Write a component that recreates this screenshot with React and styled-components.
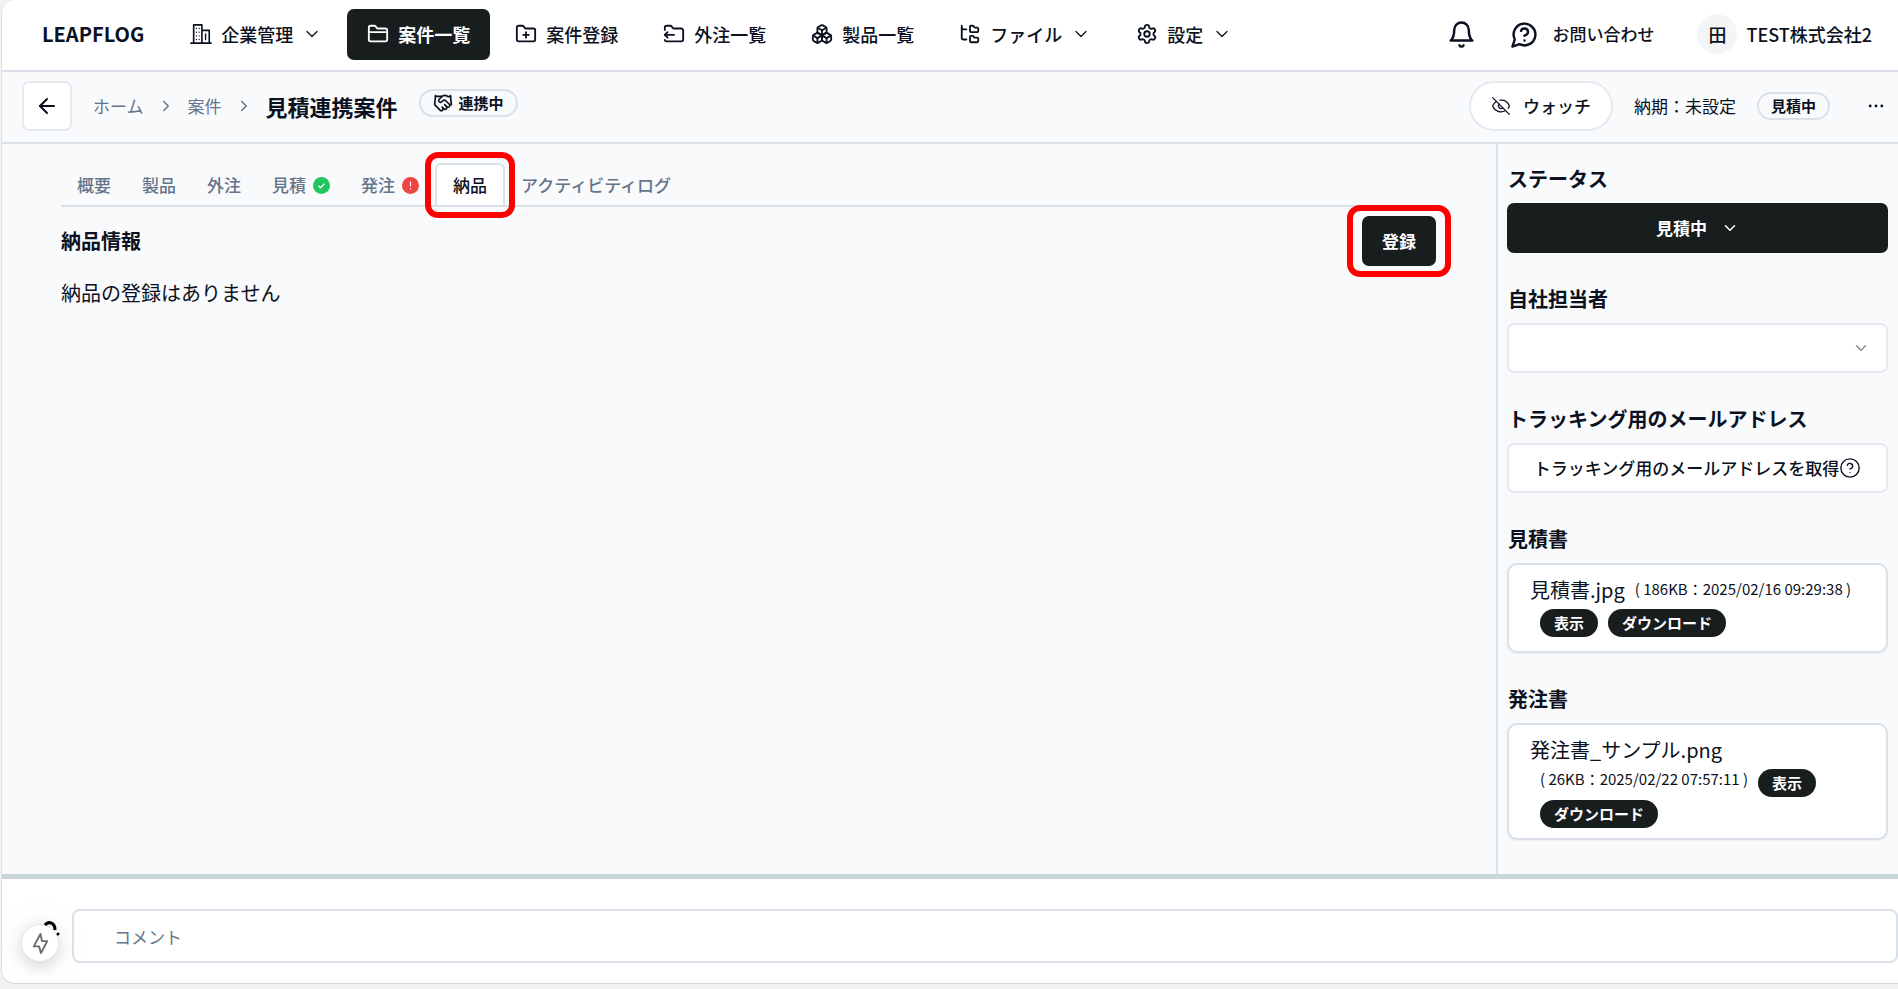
import React from "react";
import styled, { createGlobalStyle, css } from "styled-components";
import {
  ArrowLeft,
  Boxes,
  ChevronDown,
  ChevronRight,
  CircleHelp,
  Ellipsis,
  EyeOff,
  FolderClosed,
  FolderOutput,
  FolderPlus,
  FolderTree,
  Handshake,
  Settings
} from "lucide-react";

const colors = {
  ink: "#0b1120",
  dark: "#181d1e",
  muted: "#64748b",
  line: "#dae1e8",
  lineSoft: "#e5eaf1",
  surface: "#f9fafc",
  marker: "#ff0000"
};

const GlobalStyle = createGlobalStyle`
  *, *::before, *::after {
    box-sizing: border-box;
  }
  body {
    margin: 0;
    background: #f1f2f3;
    color: ${colors.ink};
    font-family: "Noto Sans CJK JP", "Noto Sans", sans-serif;
    font-size: 17px;
    line-height: 24px;
  }
  h1, h2, p, ol {
    margin: 0;
    padding: 0;
  }
  button, input, select {
    font: inherit;
    color: inherit;
  }
  button {
    cursor: pointer;
  }
  a {
    color: inherit;
    text-decoration: none;
  }
  svg {
    flex: none;
  }
`;

const row = css`
  display: flex;
  align-items: center;
`;

const Shell = styled.div`
  display: flex;
  flex-direction: column;
  min-height: calc(100vh - 5px);
  margin-left: 1px;
  overflow: hidden;
  border-left: 1px solid #e0e2e4;
  border-bottom: 1px solid #d4d6d8;
  border-radius: 14px 0 0 14px;
  background: #fff;
`;

const Header = styled.header`
  ${row}
  height: 72px;
  padding: 0 26px 2px 40px;
  border-bottom: 2px solid ${colors.line};
`;

const Logo = styled.a`
  margin-right: 26px;
  font-size: 20px;
  font-weight: 700;
`;

const Nav = styled.nav`
  ${row}
  gap: 5px;
  flex: 1;
`;

const NavButton = styled.button`
  ${row}
  gap: 9px;
  height: 51px;
  padding: 0 20px;
  border: 0;
  border-radius: 7px;
  background: ${p => (p.$active ? colors.dark : "transparent")};
  color: ${p => (p.$active ? "#fff" : colors.ink)};
  font-size: 18px;
  font-weight: ${p => (p.$active ? 700 : 500)};
`;

const HeaderTools = styled.div`
  ${row}
  gap: 17px;
  font-weight: 500;
`;

const IconButton = styled.button`
  ${row}
  justify-content: center;
  padding: 0;
  width: 30px;
  height: 32px;
  border: 0;
  background: none;
`;

const NoticeButton = styled(IconButton)`
  margin-right: 17px;
`;

const MoreButton = styled(IconButton)`
  margin-left: 10px;
`;

const ContactLink = styled.a`
  ${row}
  gap: 13px;
  margin-right: 26px;
`;

const Account = styled.button`
  ${row}
  gap: 9px;
  padding: 0;
  border: 0;
  background: none;
  font-size: 18px;
  font-weight: 500;
`;

const Avatar = styled.span`
  ${row}
  justify-content: center;
  width: 40px;
  height: 40px;
  border-radius: 50%;
  background: #f3f5f7;
`;

const SubHeader = styled.div`
  ${row}
  justify-content: space-between;
  height: 72px;
  padding: 0 7px 2px 20px;
  border-bottom: 2px solid ${colors.line};
  background: ${colors.surface};
`;

const SubHeaderSide = styled.div`
  ${row}
  gap: 21px;
`;

const BackButton = styled.button`
  ${row}
  justify-content: center;
  width: 50px;
  height: 50px;
  padding: 0;
  border: 2px solid ${colors.lineSoft};
  border-radius: 7px;
  background: #fff;
`;

const Breadcrumbs = styled.ol`
  ${row}
  gap: 13px;
  list-style: none;
  color: ${colors.muted};
`;

const Crumb = styled.li`
  ${row}
`;

const Title = styled.h1`
  color: ${colors.ink};
  font-size: 22px;
  font-weight: 700;
`;

const Badge = styled.span`
  ${row}
  gap: 6px;
  height: 28px;
  padding: 0 12px;
  border: 2px solid ${colors.line};
  border-radius: 14px;
  color: ${colors.ink};
  font-size: 15px;
  font-weight: 700;
`;

const LinkBadge = styled(Badge)`
  align-self: flex-start;
  margin-top: 8px;
`;

const WatchButton = styled.button`
  ${row}
  gap: 12px;
  height: 50px;
  padding: 0 20px;
  border: 2px solid ${colors.lineSoft};
  border-radius: 25px;
  background: #fff;
  font-weight: 500;
`;

const Body = styled.div`
  display: flex;
  flex: 1;
  background: ${colors.surface};
`;

const Content = styled.main`
  flex: 1;
  min-width: 0;
  padding: 19px 60px 0 59px;
`;

const Tabs = styled.div`
  display: flex;
  gap: 1px;
  padding-left: 1px;
  border-bottom: 2px solid ${colors.line};
`;

const Tab = styled.button`
  ${row}
  gap: 7px;
  position: relative;
  height: 42px;
  padding: ${p => (p.$active ? "0 16px" : "0 15px")};
  border: ${p => (p.$active ? `2px solid ${colors.line}` : "0")};
  border-top: 2px solid ${p => (p.$active ? colors.line : "transparent")};
  border-bottom: 0;
  border-radius: 6px 6px 0 0;
  background: ${p => (p.$active ? "#fff" : "transparent")};
  color: ${p => (p.$active ? colors.ink : colors.muted)};
  font-weight: 500;
`;

const marked = css`
  position: relative;
  &::after {
    content: "";
    position: absolute;
    border: 6px solid ${colors.marker};
    border-radius: 13px;
    pointer-events: none;
  }
`;

const MarkedTab = styled(Tab)`
  ${marked}
  &::after {
    inset: -13px -12px;
  }
`;

const MarkedAction = styled.div`
  ${marked}
  &::after {
    inset: -11px -15px;
  }
`;

const SectionHead = styled.div`
  ${row}
  justify-content: space-between;
  padding-top: 9px;
`;

const SectionTitle = styled.h2`
  font-size: 20px;
  line-height: 30px;
  font-weight: 700;
`;

const PrimaryButton = styled.button`
  ${row}
  justify-content: center;
  gap: 14px;
  width: ${p => (p.$block ? "100%" : "auto")};
  height: 50px;
  padding: 0 20px;
  border: 0;
  border-radius: 7px;
  background: ${colors.dark};
  color: #fff;
  font-weight: 700;
`;

const EmptyText = styled.p`
  margin-top: 12px;
  font-size: 20px;
  line-height: 30px;
`;

const Sidebar = styled.aside`
  display: flex;
  flex-direction: column;
  gap: 31px;
  width: 402px;
  padding: 20px 10px 20px 9px;
  border-left: 2px solid ${colors.line};
`;

const Field = styled.section`
  display: flex;
  flex-direction: column;
  gap: 9px;
`;

const FieldTitle = styled(SectionTitle)`
  padding-left: 1px;
`;

const SelectWrap = styled.div`
  display: grid;
  align-items: center;
  & > * {
    grid-area: 1 / 1;
  }
  svg {
    justify-self: end;
    margin-right: 18px;
    color: #858b96;
    pointer-events: none;
  }
`;

const Select = styled.select`
  appearance: none;
  width: 100%;
  height: 50px;
  padding: 0 20px;
  border: 2px solid ${colors.lineSoft};
  border-radius: 7px;
  background: #fff;
`;

const OutlineButton = styled.button`
  ${row}
  justify-content: center;
  height: 50px;
  padding: 0 12px;
  border: 2px solid ${colors.lineSoft};
  border-radius: 7px;
  background: #fff;
  font-weight: 500;
  white-space: nowrap;
`;

const FileCard = styled.div`
  min-height: 90px;
  padding: 10px 21px;
  border: 2px solid ${colors.line};
  border-radius: 10px;
  background: #fff;
  box-shadow: 0 1px 2px rgba(15, 23, 42, 0.06);
  font-size: 20px;
  line-height: 30px;
`;

const FileMeta = styled.span`
  display: inline-block;
  margin-left: 10px;
  font-size: 15px;
  line-height: 28px;
  white-space: nowrap;
  vertical-align: top;
`;

const Pill = styled.button`
  height: 28px;
  margin-left: 10px;
  padding: 0 14px;
  border: 0;
  border-radius: 14px;
  background: ${colors.dark};
  color: #fff;
  font-size: 15px;
  line-height: 28px;
  font-weight: 700;
  vertical-align: middle;
`;

const Footer = styled.footer`
  ${row}
  gap: 13px;
  height: 109px;
  padding: 10px 0 0 19px;
  border-top: 5px solid #cbd5dc;
`;

const QuickAction = styled.button`
  ${row}
  justify-content: center;
  position: relative;
  width: 38px;
  height: 38px;
  margin-top: 14px;
  padding: 0;
  border: 1px solid #e4e5e7;
  border-radius: 50%;
  background: #fff;
  color: #6b6b6b;
  box-shadow: 0 4px 16px rgba(0, 0, 0, 0.16), 0 0 50px rgba(0, 0, 0, 0.06);
`;

const HintMark = styled.svg`
  position: absolute;
  top: -4px;
  right: -2px;
`;

const CommentInput = styled.input`
  flex: 1;
  min-width: 0;
  height: 54px;
  padding: 0 40px;
  border: 2px solid ${colors.line};
  border-radius: 8px;
  background: transparent;
  &::placeholder {
    color: ${colors.muted};
    opacity: 1;
  }
`;

const Svg = ({ size = 24, children }) => (
  <svg
    width={size}
    height={size}
    viewBox="0 0 24 24"
    fill="none"
    stroke="currentColor"
    strokeWidth="2"
    strokeLinecap="round"
    strokeLinejoin="round"
    aria-hidden="true"
  >
    {children}
  </svg>
);

const OfficeIcon = () => (
  <Svg size={22}>
    <path d="M1 22h22M4 22V2h9v20M13 8h8v14" strokeWidth="1.8" />
    <path d="M7 6h0M10 6h0M7 10h0M10 10h0M7 14h0M10 14h0M7 18h0M10 18h0M17 12v6" strokeWidth="1.5" />
  </Svg>
);

const BellIcon = () => (
  <Svg size={29}>
    <path d="M6 8a6 6 0 0 1 12 0c0 7 3 9 3 9H3s3-2 3-9" />
    <path d="M10.3 21a1.94 1.94 0 0 0 3.4 0" />
  </Svg>
);

const QuestionBubbleIcon = () => (
  <Svg size={29}>
    <path d="M7.9 20A9 9 0 1 0 4 16.1L2 22Z" />
    <path d="M9.09 9a3 3 0 0 1 5.83 1c0 2-3 3-3 3M12 17h.01" />
  </Svg>
);

const BoltIcon = () => (
  <Svg size={23}>
    <path d="M12 2L5 15h5.5L12.5 22 19 9.5h-5.5Z" />
  </Svg>
);

const DoneIcon = () => (
  <svg width="17" height="17" viewBox="0 0 17 17" aria-label="完了">
    <circle cx="8.5" cy="8.5" r="8.5" fill="#22c55e" />
    <path d="M5.5 8.8l2 2 4-4.2" fill="none" stroke="#fff" strokeWidth="1.3" />
  </svg>
);

const AlertIcon = () => (
  <svg width="17" height="17" viewBox="0 0 17 17" aria-label="要確認">
    <circle cx="8.5" cy="8.5" r="8.5" fill="#ef4444" />
    <path d="M8.5 4.5v4.8M8.5 11.3v1.3" fill="none" stroke="#fff" strokeWidth="1.2" />
  </svg>
);

const navItems = [
  { label: "企業管理", icon: <OfficeIcon />, menu: true },
  { label: "案件一覧", icon: <FolderClosed size={22} />, active: true },
  { label: "案件登録", icon: <FolderPlus size={22} /> },
  { label: "外注一覧", icon: <FolderOutput size={22} /> },
  { label: "製品一覧", icon: <Boxes size={22} /> },
  { label: "ファイル", icon: <FolderTree size={22} />, menu: true },
  { label: "設定", icon: <Settings size={22} />, menu: true }
];

const tabs = [
  { label: "概要" },
  { label: "製品" },
  { label: "外注" },
  { label: "見積", icon: <DoneIcon /> },
  { label: "発注", icon: <AlertIcon /> },
  { label: "納品", active: true },
  { label: "アクティビティログ" }
];

const files = [
  {
    title: "見積書",
    name: "見積書.jpg",
    meta: "( 186KB：2025/02/16 09:29:38 )"
  },
  {
    title: "発注書",
    name: "発注書_サンプル.png",
    meta: "( 26KB：2025/02/22 07:57:11 )"
  }
];

const TopBar = () => (
  <Header>
    <Logo href="#">LEAPFLOG</Logo>
    <Nav>
      {navItems.map(item => (
        <NavButton key={item.label} $active={item.active}>
          {item.icon}
          {item.label}
          {item.menu && <ChevronDown size={20} strokeWidth={1.5} />}
        </NavButton>
      ))}
    </Nav>
    <HeaderTools>
      <NoticeButton aria-label="通知">
        <BellIcon />
      </NoticeButton>
      <ContactLink href="#">
        <QuestionBubbleIcon />
        お問い合わせ
      </ContactLink>
      <Account>
        <Avatar>田</Avatar>
        TEST株式会社2
      </Account>
    </HeaderTools>
  </Header>
);

const CaseBar = () => (
  <SubHeader>
    <SubHeaderSide>
      <BackButton aria-label="戻る">
        <ArrowLeft size={24} />
      </BackButton>
      <Breadcrumbs>
        <Crumb>
          <a href="#">ホーム</a>
        </Crumb>
        <ChevronRight size={18} />
        <Crumb>
          <a href="#">案件</a>
        </Crumb>
        <ChevronRight size={18} />
        <Crumb>
          <Title>見積連携案件</Title>
        </Crumb>
      </Breadcrumbs>
      <LinkBadge>
        <Handshake size={20} />
        連携中
      </LinkBadge>
    </SubHeaderSide>
    <SubHeaderSide>
      <WatchButton>
        <EyeOff size={20} strokeWidth={1.5} />
        ウォッチ
      </WatchButton>
      <span>納期：未設定</span>
      <Badge>見積中</Badge>
      <MoreButton aria-label="メニュー">
        <Ellipsis size={20} strokeWidth={1.5} />
      </MoreButton>
    </SubHeaderSide>
  </SubHeader>
);

const Delivery = () => (
  <Content>
    <Tabs role="tablist">
      {tabs.map(tab => {
        const Item = tab.active ? MarkedTab : Tab;
        return (
          <Item key={tab.label} role="tab" aria-selected={!!tab.active} $active={tab.active}>
            {tab.label}
            {tab.icon}
          </Item>
        );
      })}
    </Tabs>
    <SectionHead>
      <SectionTitle>納品情報</SectionTitle>
      <MarkedAction>
        <PrimaryButton>登録</PrimaryButton>
      </MarkedAction>
    </SectionHead>
    <EmptyText>納品の登録はありません</EmptyText>
  </Content>
);

const CaseSidebar = () => (
  <Sidebar>
    <Field>
      <FieldTitle>ステータス</FieldTitle>
      <PrimaryButton $block>
        見積中
        <ChevronDown size={18} />
      </PrimaryButton>
    </Field>
    <Field>
      <FieldTitle as="label" htmlFor="owner">
        自社担当者
      </FieldTitle>
      <SelectWrap>
        <Select id="owner" />
        <ChevronDown size={18} />
      </SelectWrap>
    </Field>
    <Field>
      <FieldTitle>トラッキング用のメールアドレス</FieldTitle>
      <OutlineButton>
        トラッキング用のメールアドレスを取得
        <CircleHelp size={22} strokeWidth={1.5} />
      </OutlineButton>
    </Field>
    {files.map(file => (
      <Field key={file.title}>
        <FieldTitle>{file.title}</FieldTitle>
        <FileCard>
          {file.name}
          <wbr />
          <FileMeta>{file.meta}</FileMeta>
          <wbr />
          <Pill>表示</Pill>
          <wbr />
          <Pill>ダウンロード</Pill>
        </FileCard>
      </Field>
    ))}
  </Sidebar>
);

const CommentBar = () => (
  <Footer>
    <QuickAction aria-label="クイック操作">
      <BoltIcon />
      <HintMark width="16" height="16" viewBox="0 0 16 16" fill="none" aria-hidden="true">
        <path d="M1 4C4 0 11 1 11 9" stroke="#000" strokeWidth="3" />
        <circle cx="14" cy="13" r="1.5" fill="#000" />
      </HintMark>
    </QuickAction>
    <CommentInput aria-label="コメント" placeholder="コメント" />
  </Footer>
);

export default function App() {
  return (
    <>
      <GlobalStyle />
      <Shell>
        <TopBar />
        <CaseBar />
        <Body>
          <Delivery />
          <CaseSidebar />
        </Body>
        <CommentBar />
      </Shell>
    </>
  );
}
